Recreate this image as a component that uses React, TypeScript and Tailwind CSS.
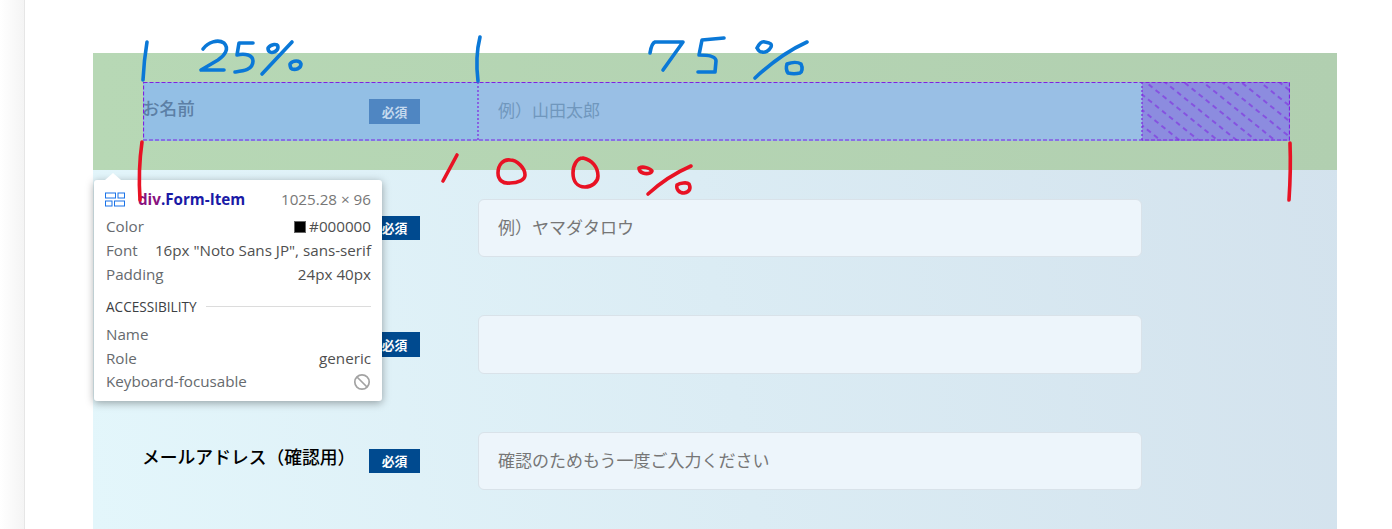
const jp = 'font-["Noto_Sans_CJK_JP","Noto_Sans",sans-serif]';

function Badge({ dim }: { dim?: boolean }) {
  return (
    <span
      className={`ml-auto flex h-[24.5px] w-[51px] shrink-0 items-center justify-center text-[12.8px] font-bold ${
        dim ? 'bg-[#4f86c2] text-[#c4d9ee]' : 'bg-[#004a8f] text-white'
      }`}
    >
      必須
    </span>
  );
}

// rows 2 and 3 have their label hidden behind the inspector popup
function FormRow({ label, placeholder }: { label?: string; placeholder?: string }) {
  return (
    <div className="flex py-[29px] pl-[50px] pr-[47px]">
      <div className="flex w-[335px] shrink-0 items-center pr-[58px]">
        {label && <span className="mb-2 -ml-px whitespace-nowrap text-[17.8px] font-medium leading-none text-black">{label}</span>}
        <Badge />
      </div>
      <div className="flex h-[58.5px] w-[664px] items-center rounded-md border border-[#d9e2e9] bg-[#edf5fb] pb-0.5 pl-[19px] pr-5 text-[17px] text-[#767676]">
        {placeholder}
      </div>
    </div>
  );
}

// row under the devtools highlight
function HighlightedRow() {
  return (
    <div className="bg-linear-to-r from-[#b7d8b5] to-[#b1cfb0] py-[29px] pl-[50px] pr-[47px]">
      <div className="relative flex h-[58.5px]">
        <div className="flex w-[335px] shrink-0 items-center bg-[#93bfe5] pr-[58px]">
          <span className="mb-[7px] -ml-px whitespace-nowrap text-[17.6px] font-medium leading-none text-[#5c7fa6]">お名前</span>
          <Badge dim />
        </div>
        <div className="flex w-[664px] shrink-0 items-center bg-[#99bfe5] pb-1 pl-5 pr-5 text-[17px] text-[#7097bd]">
          例）山田太郎
        </div>
        <div className="flex-1 bg-[#8c8cdf]" />
        <svg className="pointer-events-none absolute inset-0 h-full w-full" fill="none" stroke="#7f22e0" aria-hidden="true">
          <defs>
            <pattern id="hatch" width="9" height="12" patternUnits="userSpaceOnUse" patternTransform="rotate(39)">
              <line x1="0" y1="5" x2="9" y2="5" stroke="#7f22e0" strokeWidth="1.1" strokeDasharray="5 4" />
            </pattern>
          </defs>
          <rect x="999" y="0" width="148" height="58.5" fill="url(#hatch)" stroke="none" />
          <rect x="0.5" y="0.5" width="1146" height="57.5" strokeWidth="1.2" strokeDasharray="4 2" />
          <path d="M335 0V58M999 0V58" strokeWidth="1.2" strokeDasharray="2 2" />
        </svg>
      </div>
    </div>
  );
}

function InfoRow({ name, children }: { name: string; children?: React.ReactNode }) {
  return (
    <div className="flex h-[23.6px] items-center justify-between whitespace-nowrap">
      <span className="text-[#666a6e]">{name}</span>
      <span className="flex items-center text-[#4f4f4f]">{children}</span>
    </div>
  );
}

function Inspector() {
  return (
    <div className='absolute left-[94px] top-[180px] h-[221px] w-[288px] rounded-[3px] bg-white pl-[12px] pr-[11px] pt-[8px] font-["Open_Sans",sans-serif] text-[15.2px] shadow-[0_2px_8px_rgba(0,0,0,0.35)]'>
      <div className="absolute -top-[7px] left-[11px] size-0 border-x-[8px] border-b-[7px] border-x-transparent border-b-white" />
      <div className="flex h-[22px] items-center justify-between">
        <div className="flex items-center">
          <svg width="20" height="15" viewBox="0 0 20 15" fill="none" stroke="#1a73e8" strokeWidth="1" className="-ml-px" aria-hidden="true">
            <rect x="0.5" y="1" width="10" height="5" />
            <rect x="13" y="1" width="6.5" height="5" />
            <rect x="0.5" y="9" width="6.5" height="5" />
            <rect x="9.5" y="9" width="10" height="5" />
          </svg>
          <span className="ml-[13px] font-bold">
            <span className="text-[#881280]">div</span>
            <span className="text-[#1a1aa6]">.Form-Item</span>
          </span>
        </div>
        <span className="text-[#777]">1025.28 × 96</span>
      </div>
      <div className="mt-[5px]">
        <InfoRow name="Color">
          <span className="mr-[3px] size-[12px] border border-[#666] bg-black" />
          #000000
        </InfoRow>
        <InfoRow name="Font">16px "Noto Sans JP", sans-serif</InfoRow>
        <InfoRow name="Padding">24px 40px</InfoRow>
      </div>
      <div className="mt-[9px] flex h-[24px] items-center gap-[9px] text-[13.6px] text-[#3c4043]">
        ACCESSIBILITY
        <div className="h-px flex-1 bg-[#dcdcdc]" />
      </div>
      <div className="mt-[4px]">
        <InfoRow name="Name" />
        <InfoRow name="Role">generic</InfoRow>
        <InfoRow name="Keyboard-focusable">
          <svg width="18" height="18" viewBox="0 0 18 18" fill="none" stroke="#a3a3a3" strokeWidth="1.7" aria-hidden="true">
            <circle cx="9" cy="9" r="7.2" />
            <path d="M4 4l10 10" />
          </svg>
        </InfoRow>
      </div>
    </div>
  );
}

// pen marks drawn over the screenshot
function Annotations() {
  const blue = [
    'M147 42Q144 60 143 80',
    'M203 49C208 42 218 39 224 43C230 49 224 56 218 60L201 70L224 70',
    'M253 43L239 43L237 55C245 53 253 55 253 61C253 70 243 71 235 72',
    'M292 42L262 74',
    'M268 48C271 44 278 43 278 47C278 52 272 53 270 52C268 51 268 50 268 48',
    'M290 64C293 60 300 60 301 64C301 69 295 70 292 69C290 68 290 66 290 64',
    'M480 37Q475 57 478 81',
    'M650 53C651 47 652 43 655 42L683 42L663 70',
    'M724 38L702 40L699 55C708 55 716 56 716 61L715 72L698 72',
    'M807 42C785 52 770 64 755 78',
    'M757 48C759 44 762 41 765 42C771 43 772 44 771 47C769 51 765 53 762 52C760 52 758 50 757 48',
    'M787 64C792 62 798 62 801 64C803 68 802 72 800 73C796 74 792 74 788 73C786 70 786 67 787 64',
  ];
  const red = [
    'M142 142Q138 170 140 200',
    'M457 155L443 181',
    'M510 160C503 159 498 165 498 173C498 180 503 184 510 183C518 183 525 180 525 175C525 168 517 160 510 160',
    'M583 158C577 158 573 165 573 173C573 181 577 187 585 187C592 187 598 182 598 176C598 167 592 160 583 158',
    'M691 166C675 173 660 183 648 194',
    'M639 168C643 166 650 168 652 171C651 174 646 174 643 173C640 172 639 170 639 168',
    'M677 185C680 183 687 182 689 184C691 188 690 192 684 193C679 193 676 189 677 185',
    'M1290 143Q1291 170 1289 200',
  ];
  return (
    <svg className="pointer-events-none absolute left-0 top-0 h-[529px] w-[1392px]" fill="none" strokeWidth="3.6" strokeLinecap="round" strokeLinejoin="round" aria-hidden="true">
      {blue.map((d) => (
        <path key={d} d={d} stroke="#0a78d7" />
      ))}
      {red.map((d) => (
        <path key={d} d={d} stroke="#e81224" />
      ))}
    </svg>
  );
}

export default function App() {
  return (
    <div className={`relative flex h-screen overflow-hidden bg-white ${jp}`}>
      <div className="w-[25px] shrink-0 border-r border-[#e6e6e6] bg-linear-to-r from-white to-[#f4f4f4]" />
      <main className="flex-1 pl-[68px] pr-[55px] pt-[53px]">
        <div className="h-full bg-linear-[80deg] from-[#e3f6fb] to-[#d3e2ed]">
          <HighlightedRow />
          <FormRow placeholder="例）ヤマダタロウ" />
          <FormRow />
          <FormRow label="メールアドレス（確認用）" placeholder="確認のためもう一度ご入力ください" />
        </div>
      </main>
      <Inspector />
      <Annotations />
    </div>
  );
}
